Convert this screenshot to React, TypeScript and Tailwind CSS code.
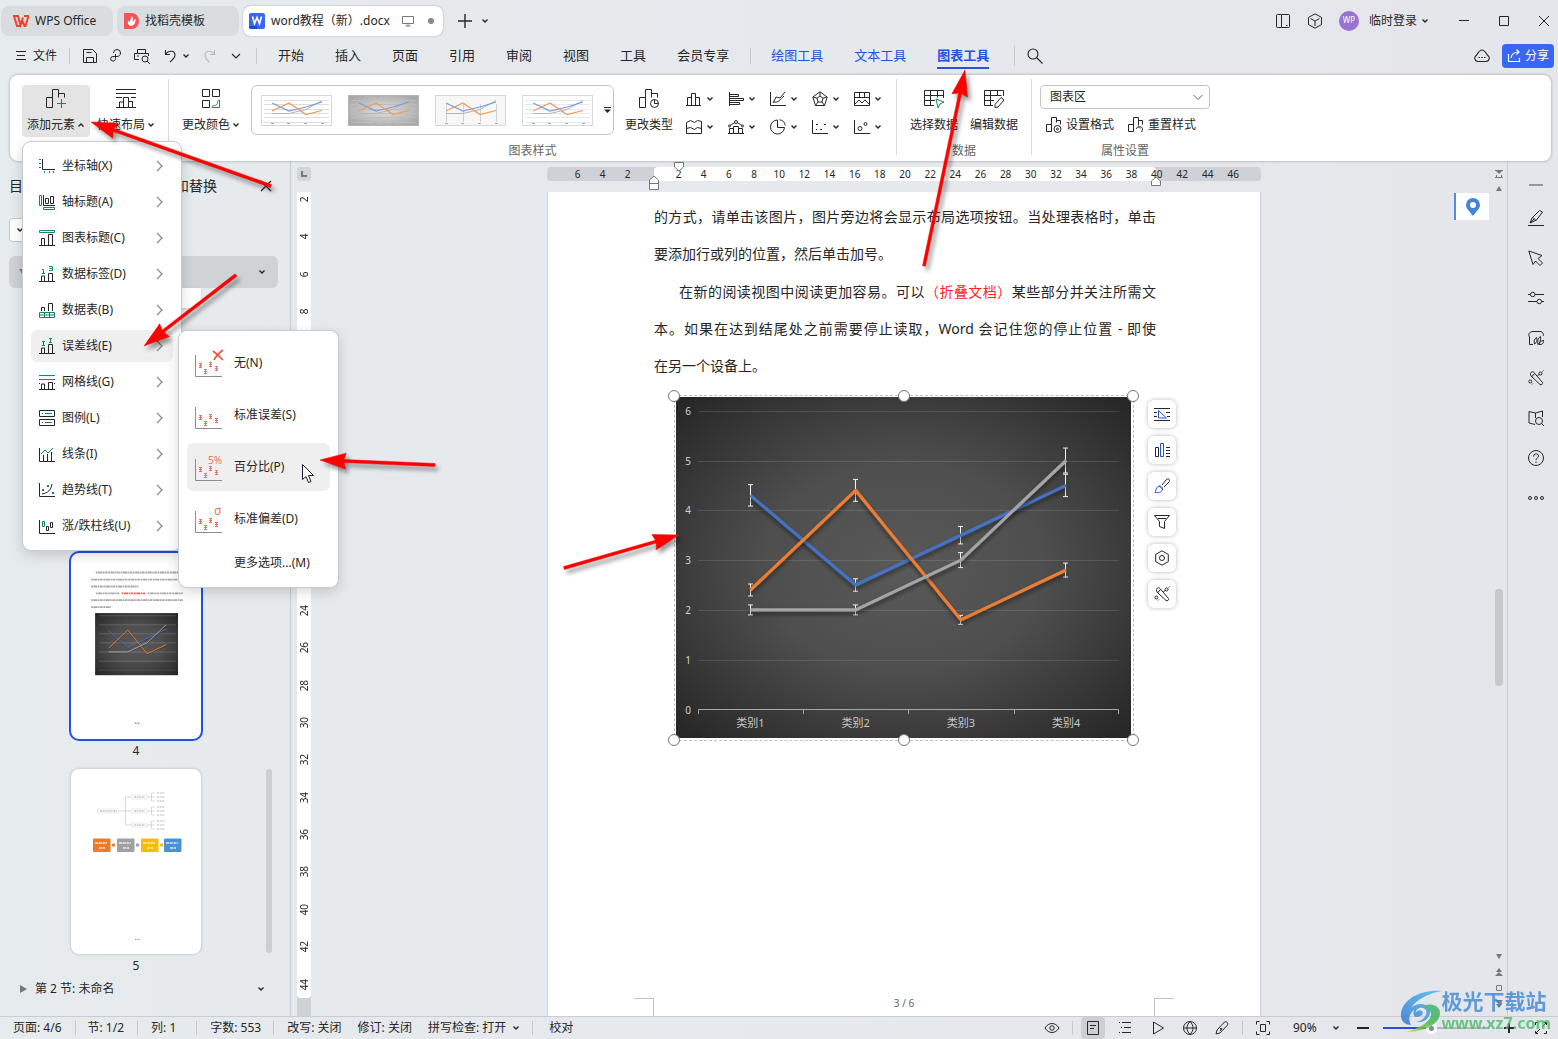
import { ReactNode } from 'react';

const GREEN = '#0f8a5f';
const RED = '#e8745f';

function Ic({ s = 16, w = 1, d, g, children, className = '' }: {
  s?: number; w?: number; d?: string; g?: string; children?: ReactNode; className?: string;
}) {
  return (
    <svg width={s} height={s} viewBox={`0 0 ${s} ${s}`} fill="none" stroke="currentColor" strokeWidth={w} className={`shrink-0 ${className}`} aria-hidden="true">
      {d && <path d={d} />}
      {g && <path d={g} stroke={GREEN} />}
      {children}
    </svg>
  );
}

function Chevron({ up = false }: { up?: boolean }) {
  return (
    <svg width="8" height="8" viewBox="0 0 8 8" fill="none" stroke="currentColor" strokeWidth="1.4" className="shrink-0" aria-hidden="true">
      <path d={up ? 'M1.5 5.5L4 3l2.5 2.5' : 'M1.5 2.5L4 5l2.5-2.5'} />
    </svg>
  );
}

const TABS = ['开始', '插入', '页面', '引用', '审阅', '视图', '工具', '会员专享'];

const MENU = [
  { label: '坐标轴(X)', d: 'M3.5 1v10.5H16', g: 'M0 1.5h2M0 5.5h2M0 9.5h2M5.5 13v2M10.5 13v2M14.5 13v2' },
  { label: '轴标题(A)', d: 'M4.5 1v10.5H16M6.5 9.5v-5h3v5zM11.5 9.5v-7h3v7z', g: 'M.5 1.5h2v10h-2zM4.5 13.5h11v2h-11z' },
  { label: '图表标题(C)', d: 'M0 15.5h16M2.5 15V8.5h3V15M9.5 15V4.5h4V15', g: 'M.5.5h15v2H.5z' },
  { label: '数据标签(D)', d: 'M0 15.5h16M2.5 15v-5h3v5M9.5 15V7.5h4V15', g: 'M3 3.5h1.5v4M3 7.5h3M10 .5h3.5v4H10M10.5 2.5h3' },
  { label: '数据表(B)', d: 'M2.5 9V5.5h3V9M9.5 9V1.5h4V9', g: 'M.5 10.5h15v5H.5zM.5 13h15M5.5 10.5v5M10.5 10.5v5' },
  { label: '误差线(E)', d: 'M0 15.5h16M2.5 15v-5h3v5M9.5 15V6.5h4V15', g: 'M3 3.5h3M4.5 3.5v4M3 7.5h3M10 .5h3M11.5.5v4M10 4.5h3', active: true },
  { label: '网格线(G)', d: 'M0 15.5h16M2.5 15v-5h3v5M9.5 15V8.5h4V15M0 9.5h1M15 9.5h1', g: 'M0 1.5h16M0 5.5h16' },
  { label: '图例(L)', d: 'M.5.5h15v6H.5zM.5 9.5h15v6H.5z', g: 'M3 3.5h1M6 3.5h7M3 12.5h1M6 12.5h7' },
  { label: '线条(I)', d: 'M.5 2v13.5H16M4.5 15V9M8.5 15V8M12.5 15V6', g: 'M2 8l4-4 3 3 5-5' },
  { label: '趋势线(T)', d: 'M.5 1v13.5H16M3 12c6-1 9-4 10-10', g: 'M3 7.5h2M8 3.5h2M13 10.5h2M3 8.5h2M8 4.5h2M13 11.5h2' },
  { label: '涨/跌柱线(U)', d: 'M.5 2v13.5H16M7.5 8.5h2v4h-2zM11.5 4.5h2v5h-2z', g: 'M3.5 3.5h2v5h-2z' },
];

const SUBMENU = [
  { label: '无(N)', mark: 'x' },
  { label: '标准误差(S)', mark: '' },
  { label: '百分比(P)', mark: '5%', active: true },
  { label: '标准偏差(D)', mark: 'σ' },
];

const BARS = 'M6.5 18.5h-6v-10h6M6.5 18.5V.5h6v8M12.5 4.5h6v4';

const CHART_TYPES = [
  { name: '柱形图', d: 'M1.5 14.5v-8h4v8M5.5 14.5v-12h4v12M9.5 14.5v-8h4v8M0 14.5h15' },
  { name: '条形图', d: 'M1.5 1v14M1.5 3.5h9v2h-9M1.5 7.5h14v2h-14M1.5 11.5h10v2h-10' },
  { name: '折线图', d: 'M.5 1v13.5H16M3 12l3-6 4 1 5-6M4 11c4 1 6-2 10-6' },
  { name: '雷达图', d: 'M8 .8l7.200 5.200L12.500 14.500h-9L.8 6zM8 5L11 7.200 10 11H6L5 7.200zM8 1v4M15 6l-4 1.200M1 6l4 1.200M3.500 14.500L6 11M12.500 14.500L10 11' },
  { name: '模板', d: 'M.5 1.5h15v13H.5zM5.5 1.5v5M10.5 1.5v5M.5 6.5h15M1 13l4-4 3 3 3-3 4 4' },
  { name: '面积图', d: 'M.5 14.5V3.5l4-2 4 2 3-2 4 1v12zM.5 9.5l4-1 4 2 3-2 4 1' },
  { name: '组合图', d: 'M1.5 14.5v-5h4v5M5.5 14.5v-7h5v7M10.5 14.5v-5h4v5M0 14.5h16M2 6.5l5-3M9 3.5l5 3M6.5 3a1.500 1.500 0 103 0 1.500 1.500 0 10-3 0M.5 7a1 1 0 102 0 1 1 0 10-2 0M13.5 7a1 1 0 102 0 1 1 0 10-2 0' },
  { name: '饼图', d: 'M7.500 1A7 7 0 1014.500 8.500H7.500zM9.500.8A6.500 6.500 0 0115.200 6.500' },
  { name: '散点图', d: 'M.5 1v13.5H16M4 5.5h2M12 5.5h2M8 10.500h2M4 10.5h1' },
  { name: '气泡图', d: 'M.5 1v13.5H16M4 9.5a2 2 0 104 0 2 2 0 10-4 0M10 5a1.500 1.500 0 103 0 1.500 1.500 0 10-3 0' },
];

function ErrorBarIcon({ mark }: { mark: string }) {
  const marks = [[5, 17], [10, 23], [15, 16], [21, 20]];
  return (
    <svg width="30" height="30" viewBox="0 0 30 30" fill="none" className="shrink-0 overflow-visible" aria-hidden="true">
      <path d="M.5 7v21.5H27" stroke="#8c8c8c" />
      {marks.map(([x, y]) => (
        <path key={x} d={`M${x - 1} ${y - 1.5}h3M${x + 0.5} ${y - 1.5}v4M${x - 1} ${y + 2.5}h3M${x - 1} ${y + 0.5}h3`} stroke={RED} />
      ))}
      {mark === 'x' && <path d="M18 3c4 3 7 6 10 9M28 2c-4 3-7 6-9 10" stroke="#e8553a" strokeWidth="1.6" />}
      {mark === '5%' && <text x="13" y="12" fontSize="10" fill={RED}>5%</text>}
      {mark === 'σ' && <text x="19" y="11" fontSize="12" fill={RED}>σ</text>}
    </svg>
  );
}

function SubMenu() {
  return (
    <ul role="menu" aria-label="误差线" className="absolute left-[156px] top-[189px] flex w-[159px] flex-col gap-1 rounded-lg bg-white p-2 shadow-[0_0_0_1px_#c8ccd0,0_4px_14px_rgba(0,0,0,0.18)]">
      {SUBMENU.map((m) => (
        <li key={m.label} role="none">
          <button role="menuitem" className={`flex h-12 w-full items-center rounded-md pl-2 ${m.active ? 'bg-[#efefef]' : ''}`}>
            <ErrorBarIcon mark={m.mark} />
            <span className="ml-[9px]">{m.label}</span>
          </button>
        </li>
      ))}
      <li role="none">
        <button role="menuitem" className="flex h-8 w-full items-center pl-[47px]">更多选项...(M)</button>
      </li>
    </ul>
  );
}

function ElementMenu() {
  return (
    <ul role="menu" aria-label="添加元素" className="absolute left-px top-[57px] z-30 flex w-[158px] flex-col gap-1 rounded-lg bg-white p-2 shadow-[0_0_0_1px_#c8ccd0,0_4px_14px_rgba(0,0,0,0.18)]">
      {MENU.map((m) => (
        <li key={m.label} role="none">
          <button role="menuitem" className={`flex h-8 w-full items-center rounded-md pl-2 pr-2 ${m.active ? 'bg-[#efefef]' : ''}`}>
            <Ic d={m.d} g={m.g} />
            <span className="ml-[7px] flex-1 text-left">{m.label}</span>
            <Ic s={12} w={1.2} d="M4 1l5 5-5 5" className="text-[#888]" />
          </button>
          {m.active && <SubMenu />}
        </li>
      ))}
    </ul>
  );
}

function TitleBar() {
  return (
    <header className="flex h-[41px] shrink-0 items-center pl-px pr-2">
      <button className="flex h-[30px] w-28 items-center gap-1.5 rounded-lg bg-[#dadde0] pl-3">
        <Ic w={2} className="text-[#f0402f]"><path d="M0 3h5l2.500 9L10 4.500M1 3l3 10h3.500M9 7l2.500 6h1L15.500 3H11" /></Ic>
        <span className="text-xs">WPS Office</span>
      </button>
      <button className="ml-1 flex h-[30px] w-[122px] items-center gap-1.5 rounded-lg bg-[#dadde0] pl-[7px]">
        <svg width="15" height="16" viewBox="0 0 15 16" aria-hidden="true">
          <path d="M0 0h8a7 8 0 010 16H0z" fill="#f2565b" />
          <path d="M7.500 3c2 1.500 1.500 4 .8 5.500C10 8 10.500 6.500 11 5.500c1.500 3-.5 7-4 7.500-3-.5-3.500-3-3-5 .8 0 1.500.8 1.800 1.500C5.500 7 7.500 6 7.500 3z" fill="#fff" />
        </svg>
        <span>找稻壳模板</span>
      </button>
      <div className="ml-1 flex h-[30px] w-[200px] items-center rounded-lg bg-white pl-1.5 shadow-[0_0_2px_rgba(0,0,0,0.3)]">
        <svg width="16" height="16" viewBox="0 0 16 16" aria-hidden="true">
          <rect width="16" height="16" rx="2" fill="#3a66f5" />
          <path d="M0 13h8v3H2a2 2 0 01-2-2z" fill="#1d47d0" />
          <path d="M3.500 3.500l2 7L8 4.500l2.500 6 2-7" fill="none" stroke="#fff" strokeWidth="1.6" />
        </svg>
        <span className="ml-1.5 whitespace-nowrap">word教程（新）.docx</span>
        <Ic s={12} d="M.5 1.5h11v7H.5zM3.5 11h5M6 8.5V11" className="ml-3 text-[#777]" />
        <span className="ml-3.5 size-1.5 rounded-full bg-[#888]" />
      </div>
      <button aria-label="新建" className="ml-3.5"><Ic w={1.4} d="M8 1v14M1 8h14" /></button>
      <button aria-label="标签列表" className="ml-2"><Chevron /></button>
      <div className="ml-auto flex items-center">
        <button aria-label="多设备"><Ic d="M6 1.5H2.500a1 1 0 00-1 1v11a1 1 0 001 1H6M6.500 1.5h7a1 1 0 011 1v11a1 1 0 01-1 1h-7zM11 12.5h1.500" /></button>
        <button aria-label="应用" className="ml-4"><Ic d="M8 .8l6.500 3.600v7.200L8 15.200l-6.500-3.600V4.400zM3.500 5.500L8 8l4.500-2.500M8 8v5" /></button>
        <span className="ml-4 flex size-5 items-center justify-center rounded-full bg-[#9873d0] text-[8px] text-white">WP</span>
        <button className="ml-2.5 flex items-center gap-1">临时登录<Chevron /></button>
        <button aria-label="最小化" className="ml-[29px]"><Ic s={12} d="M1 5.5h10" /></button>
        <button aria-label="最大化" className="ml-7"><Ic s={12} d="M1.5 1.5h9v9h-9z" /></button>
        <button aria-label="关闭" className="ml-7"><Ic s={12} d="M1 1l10 10M11 1L1 11" /></button>
      </div>
    </header>
  );
}

function MenuBar() {
  return (
    <nav className="flex h-[30px] shrink-0 items-center pl-4 pr-1 text-[13px]">
      <button className="flex items-center gap-[7px] text-xs">
        <Ic s={10} d="M0 .5h10M1 4.5h8M0 8.5h10" />文件
      </button>
      <span className="ml-3 h-4 w-px bg-[#c5c9cc]" />
      <button aria-label="保存" className="ml-3"><Ic d="M1.5 1.5h9l4 4v9h-13zM4.500 14V9.500h7V14M4.500 4.500h5" /></button>
      <button aria-label="导出" className="ml-2.5"><Ic d="M5.500 5a3.500 3.500 0 117 0c0 2-1.500 3.500-3.500 3.500H5a2.300 2.300 0 100 4.600c1.700 0 2.500-1.200 2.500-2.600V6" /></button>
      <button aria-label="打印预览" className="ml-2.5"><Ic d="M3.500 5V1.500h8V5M5 11.500H.5v-6h14V8M3 8h2M8 11a3 3 0 106 0 3 3 0 10-6 0M13 13l3 3" /></button>
      <button aria-label="撤销" className="ml-3 flex items-center gap-1"><Ic w={1.1} d="M3.500 2v4.500H8M3.500 6.500C6 2 13 2 13 7c0 3-3 5-5 7" /><Chevron /></button>
      <button aria-label="恢复" className="ml-3 text-[#b5b8bb]"><Ic w={1.1} d="M12.500 2v4.500H8M12.500 6.500C10 2 3 2 3 7c0 3 2 5 4 7" /></button>
      <button aria-label="更多" className="ml-3"><Ic s={12} w={1.1} d="M2 4l4 4 4-4" /></button>
      <span className="ml-3.5 h-4 w-px bg-[#c5c9cc]" />
      <div className="ml-[21px] flex gap-[31px]">
        {TABS.map((t) => <button key={t}>{t}</button>)}
      </div>
      <span className="ml-[21px] h-4 w-px bg-[#c5c9cc]" />
      <div className="ml-5 flex gap-[31px] text-[#2352e0]">
        <button>绘图工具</button>
        <button>文本工具</button>
        <button className="-mb-1 border-b-2 border-[#2352e0] pb-0.5 font-bold">图表工具</button>
      </div>
      <span className="ml-[25px] h-5 w-px bg-[#c5c9cc]" />
      <button aria-label="搜索" className="ml-3"><Ic w={1.1} d="M1 6a5 5 0 1010 0A5 5 0 101 6M9.500 9.500l6 6" /></button>
      <button aria-label="云同步" className="ml-auto"><Ic w={1.1} d="M4 13.500h8a3.300 3.300 0 001.500-6.200C12 5 10.500 2 8 2S4 5 2.500 7.300A3.300 3.300 0 004 13.500zM4.500 9.500h1.500M7.300 9.500h1.500M10 9.500h1.500" /></button>
      <button className="ml-3 flex h-6 w-[52px] items-center justify-center gap-1 rounded-[4px] bg-[#3a66f5] text-xs text-white">
        <Ic s={14} w={1.2} d="M1.5 5v7.500h11V9M4 9c.5-4 3-6 8-6M9.500.5L12 3 9.500 5.500" />分享
      </button>
    </nav>
  );
}

function StyleThumb({ kind }: { kind: number }) {
  return (
    <button aria-label={`样式 ${kind + 1}`}>
      <svg width="71" height="31" viewBox="0 0 71 31" fill="none" aria-hidden="true">
        <defs>
          <radialGradient id="styleGrey" cx="50%" cy="50%" r="60%">
            <stop offset="0" stopColor="#e2e2e2" />
            <stop offset="1" stopColor="#a8a8a8" />
          </radialGradient>
        </defs>
        <rect x=".5" y=".5" width="70" height="30" fill={kind === 1 ? 'url(#styleGrey)' : kind === 2 ? '#f7f7f7' : '#fff'} stroke={kind === 1 ? '#b5b5b5' : kind === 3 ? '#d3dae4' : '#d8d8d8'} />
        {kind !== 2 && [5, 9, 14, 18, 22, 27].map((y) => <path key={y} d={`M3 ${y}.5h65`} stroke={kind === 1 ? '#bdbdbd' : kind === 3 ? '#e3e9f0' : '#dedede'} />)}
        {kind === 2 && [11, 28, 45, 61].map((x) => <path key={x} d={`M${x}.5 9v18`} stroke="#d0d0d0" />)}
        <path d="M11 18.5h17l17-4 16-9" stroke="#b5b5b5" />
        <path d="M11 8l17 8 17-4 16-5" stroke="#7a9bdc" strokeWidth="1.2" />
        <path d="M11 16l17-8 17 11.500 16-4" stroke="#f29a5c" strokeWidth="1.2" />
        <path d="M10 28.5h3M26 28.5h3M43 28.5h3M60 28.5h3" stroke="#aaa" />
      </svg>
    </button>
  );
}

function BigButton({ label, icon, drop, className = 'w-[68px]' }: { label: string; icon: ReactNode; drop?: ReactNode; className?: string }) {
  return (
    <button className={`flex h-[52px] flex-col items-center justify-between rounded pb-1 pt-1 ${className}`}>
      {icon}
      <span className="flex items-center gap-0.5 whitespace-nowrap leading-4">{label}{drop}</span>
    </button>
  );
}

function Group({ title, children }: { title: string; children: ReactNode }) {
  return (
    <div className="flex flex-col items-center">
      <div className="flex h-[58px]">{children}</div>
      <span className="leading-4 text-[#666]">{title}</span>
    </div>
  );
}

function Divider() {
  return <span className="-mt-1.5 mb-1.5 w-px bg-[#dcdcdc]" />;
}

function Ribbon() {
  return (
    <section className="relative z-20 mx-2.5 mr-[7px] mt-1 flex h-[86px] shrink-0 rounded-lg bg-white pl-3 pt-2.5 shadow-[0_0_3px_rgba(0,0,0,0.35)]">
      <div className="relative flex h-[52px] gap-0.5 pr-2">
        <BigButton label="添加元素" drop={<Chevron up />} className="w-[68px] bg-[#e4e4e4]" icon={<Ic s={20} d={BARS} g="M15.5 10v9M11 14.5h9" />} />
        <BigButton label="快速布局" drop={<Chevron />} icon={<Ic s={20} d="M0 .5h20M0 4.5h20M0 8.5h6M15 8.5h5M0 18.5h20M3.500 18v-5h4v5M7.500 13V8.500h5V18M12.500 12.500h4V18" />} />
        <ElementMenu />
      </div>
      <Divider />
      <Group title="图表样式">
        <div className="flex w-[727px] items-start pl-2">
          <BigButton label="更改颜色" drop={<Chevron />} icon={<Ic s={20} d="M1.5.5h7v7h-7zM11.500.5h7v7h-7zM1.5 11.500h7v7h-7z" g="M11 18.5h7.500V11c-1 0-2 1-2 2.500s-1 3-3 3-2.500 1-2.500 2z" />} />
          <div className="ml-1.5 flex h-[50px] w-[363px] items-center gap-4 rounded-md border border-[#c4c4c4] pl-[9px]">
            {[0, 1, 2, 3].map((k) => <StyleThumb key={k} kind={k} />)}
            <button aria-label="更多样式" className="-ml-[5px]"><Ic s={7} d="M0 .5h7"><path d="M0 2.500h7L3.500 6z" fill="currentColor" stroke="none" /></Ic></button>
          </div>
          <BigButton label="更改类型" className="ml-[3px] w-16" icon={<Ic s={20} d={`${BARS}M11.500 14.500a4 4 0 108 0 4 4 0 10-8 0M15.500 10.500v4h4`} />} />
          <div className="ml-[5px] grid grid-cols-5 gap-y-1 pt-0.5">
            {CHART_TYPES.map((c) => (
              <button key={c.name} aria-label={c.name} className="flex h-6 w-[42px] items-center gap-1">
                <Ic d={c.d} /><Chevron />
              </button>
            ))}
          </div>
        </div>
      </Group>
      <Divider />
      <Group title="数据">
        <div className="flex w-[134px] items-start pl-[7px]">
          <BigButton label="选择数据" className="w-[60px]" icon={<Ic s={20} d="M10 16.500H.5V1.500h19V9M.5 6.500h19M6.500 1.500v15M13.500 1.500v7M.5 11.500H11" g="M12 10l8 3-4 2-2 4z" />} />
          <BigButton label="编辑数据" className="w-[60px]" icon={<Ic s={20} d="M9 16.500H.5V1.500h19V7M.5 6.500h17M6.500 1.500v15M13.500 1.500v5M.5 11.500H10M11 18.500v-3l6-7 3 2.500-6 7z" />} />
        </div>
      </Group>
      <Divider />
      <Group title="属性设置">
        <div className="flex w-[186px] flex-col px-2">
          <div className="relative">
            <select aria-label="图表元素" className="h-6 w-[170px] appearance-none rounded-[4px] border border-[#c4c4c4] bg-white pl-[9px] text-xs leading-5">
              <option>图表区</option>
            </select>
            <Ic s={12} d="M1.5 4L6 8.500 10.500 4" className="pointer-events-none absolute right-1.5 top-1.5 text-[#666]" />
          </div>
          <div className="mt-2 flex gap-3.5 pl-1.5">
            <button className="flex items-center gap-1 whitespace-nowrap leading-4"><Ic d="M5.500 14.500h-5v-7h5M5.500 14.500V.5h5v5M10.500 3.500h4v4M8 12a3.500 3.500 0 107 0 3.500 3.500 0 10-7 0M10.500 12a1 1 0 102 0 1 1 0 10-2 0" />设置格式</button>
            <button className="flex items-center gap-1 whitespace-nowrap leading-4"><Ic d="M5.500 14.500h-5v-7h5M5.500 14.500V.5h5v8M10.500 3.500h4v4M8 12l2-2.500 2 2M10.500 10c4-1 5 2 3 5" />重置样式</button>
          </div>
        </div>
      </Group>
    </section>
  );
}

const SERIES = [
  { color: '#4472c4', values: [4.3, 2.5, 3.5, 4.5] },
  { color: '#ed7d31', values: [2.4, 4.4, 1.8, 2.8] },
  { color: '#a5a5a5', values: [2, 2, 3, 5] },
];

const cx = (i: number) => 74.5 + 105.2 * i;
const cy = (v: number) => 312.5 - 49.8 * v;

function LineChart({ small = false, ...box }: { small?: boolean; x?: number; y?: number; width: number; height: number }) {
  return (
    <svg {...box} viewBox="0 0 455 341" fill="none" role="img" aria-label="折线图">
      <defs>
        <radialGradient id="chartBg" cx="50%" cy="50%" r="68%">
          <stop offset="0" stopColor="#595959" />
          <stop offset="0.45" stopColor="#4e4e4e" />
          <stop offset="1" stopColor="#272727" />
        </radialGradient>
        <filter id="lineShadow" x="-10%" y="-10%" width="120%" height="130%">
          <feDropShadow dx="0" dy="3" stdDeviation="2" floodColor="#000" floodOpacity="0.5" />
        </filter>
      </defs>
      <rect width="455" height="341" fill="url(#chartBg)" />
      {[1, 2, 3, 4, 5, 6].map((v) => (
        <path key={v} d={`M22 ${Math.round(cy(v)) + 0.5}h421`} stroke="#fff" strokeOpacity={small ? 0.3 : 0.12} strokeWidth={small ? 3 : 1} />
      ))}
      <path d="M22.500 317v-4.500h420v4.500M127.500 312.500v4.500M232.500 312.500v4.500M338.500 312.500v4.500" stroke="#a8a8a8" />
      {!small && [0, 1, 2, 3, 4, 5, 6].map((v) => (
        <text key={v} x="12" y={cy(v) + 4} textAnchor="middle" fontSize="10" fill="#d0d0d0">{v}</text>
      ))}
      {!small && [0, 1, 2, 3].map((i) => (
        <text key={i} x={cx(i)} y="330" textAnchor="middle" fontSize="11" fill="#c8c8c8">{`类别${i + 1}`}</text>
      ))}
      {!small && SERIES.map((s) => s.values.map((v, i) => {
        const x = Math.round(cx(i)) - 0.5;
        return <path key={`${s.color}${i}`} d={`M${x - 2.5} ${cy(v * 1.05)}h5M${x} ${cy(v * 1.05)}V${cy(v * 0.95)}M${x - 2.5} ${cy(v * 0.95)}h5`} stroke="#f2f2f2" />;
      }))}
      {SERIES.map((s) => (
        <polyline key={s.color} points={s.values.map((v, i) => `${cx(i)},${cy(v)}`).join(' ')} stroke={s.color} strokeWidth={small ? 5 : 3.2} strokeLinejoin="round" filter="url(#lineShadow)" />
      ))}
    </svg>
  );
}

function PageThumb() {
  return (
    <svg width="130" height="186" viewBox="0 0 714 1022" aria-hidden="true">
      <g stroke="#a8a8a8" strokeWidth="10" strokeDasharray="10 3 22 3 8 3 15 4">
        <path d="M136 107h478M110 146h504M110 184h260M136 222h130M420 222h194M110 259h504M110 297h110" />
        <path d="M278 222h130" stroke="#f06060" />
      </g>
      <LineChart small x={132} y={328} width={456} height={346} />
      <path d="M350 936h10M366 936h10" stroke="#999" strokeWidth="8" />
    </svg>
  );
}

function TreeThumb() {
  const boxes = [
    { x: 22, c: '#f07a28' }, { x: 46, c: '#a0a0a0' }, { x: 70, c: '#f5bd0a' }, { x: 93, c: '#4a92d8' },
  ];
  return (
    <svg width="130" height="185" viewBox="0 0 130 185" fill="none" aria-hidden="true">
      <path d="M48 42h6.500M61 28h-6.500v28H61M54.500 42H61" stroke="#c4c8e0" strokeWidth=".7" />
      <rect x="26.500" y="40" width="21" height="4" stroke="#ddd" strokeWidth=".6" />
      <path d="M29 42h17" stroke="#aaa" strokeDasharray="2 .6" />
      {[28, 42, 56].map((y) => (
        <g key={y}>
          <rect x="61" y={y - 2} width="15" height="4" stroke="#ddd" strokeWidth=".6" />
          <path d={`M63 ${y}h11`} stroke="#aaa" strokeDasharray="2 .6" />
          <path d={`M76 ${y}h8M84 ${y - 4}h-3.500v8H84`} stroke="#ccc" strokeWidth=".7" />
          <path d={`M86 ${y - 4}h8M86 ${y}h8M86 ${y + 4}h8`} stroke="#bbb" strokeDasharray="2 .6" />
        </g>
      ))}
      {boxes.map((b, i) => (
        <g key={b.x}>
          <rect x={b.x} y="69.500" width="17.500" height="13.500" rx="1" fill={b.c} />
          <path d={`M${b.x + 2} 74h12M${b.x + 6} 79h6`} stroke="#fff" strokeOpacity=".6" strokeWidth="2" strokeDasharray="3 .7" />
          {i < 3 && <circle cx={b.x + 20.5} cy="76" r="1.700" fill={b.c} />}
        </g>
      ))}
      <path d="M64 170.500h1.500M67 170.500h1.500" stroke="#999" />
    </svg>
  );
}

function SidePanel() {
  return (
    <aside className="relative flex w-[291px] shrink-0 flex-col border-r border-[#c9ccd0]">
      <div className="flex h-12 items-center pl-[9px] text-sm">
        <button>目录</button>
        <button className="ml-4">章节</button>
        <button className="ml-4">书签</button>
        <button className="ml-[22px] whitespace-nowrap">查找和替换</button>
        <button aria-label="关闭面板" className="ml-auto mr-[18px]"><Ic s={12} w={1.2} d="M1 1l10 10M11 1L1 11" /></button>
      </div>
      <button aria-label="章节导航" className="ml-[9px] mt-2 flex h-6 w-16 items-center rounded border border-[#c4c8cc] bg-white pl-1.5"><Chevron /></button>
      <div className="ml-[9px] mr-3 mt-3.5 flex h-8 shrink-0 items-center rounded-md bg-[#cfd3d6] pl-2.5 pr-3">
        <span className="flex-1 text-[8px] text-[#777]">▼</span>
        <Chevron />
      </div>
      <ol className="ml-[71px] flex w-[130px] flex-col">
        <li className="flex h-[50px] flex-col items-center">
          <span className="h-5 w-full rounded-b-lg bg-white shadow-sm" />
          <span className="leading-6">2</span>
        </li>
        <li className="flex h-[215px] flex-col items-center">
          <span className="h-[186px] w-full rounded-lg bg-white" />
          <span className="leading-6">3</span>
        </li>
        <li className="flex h-[216px] flex-col items-center">
          <span className="block h-[186px] w-full rounded-lg bg-white outline-2 outline-[#2352e0]"><PageThumb /></span>
          <span className="leading-6">4</span>
        </li>
        <li className="flex h-[209px] flex-col items-center">
          <span className="block h-[185px] w-full rounded-lg bg-white shadow-[0_0_3px_rgba(0,0,0,0.25)]"><TreeThumb /></span>
          <span className="leading-6">5</span>
        </li>
      </ol>
      <button className="ml-5 mr-[25px] flex h-[22px] shrink-0 items-center">
        <svg width="8" height="8" viewBox="0 0 8 8" aria-hidden="true"><path d="M0 0l7 4-7 4z" fill="#777" /></svg>
        <span className="ml-[7px] flex-1 text-left">第 2 节: 未命名</span>
        <Chevron />
      </button>
      <span className="absolute right-[18px] top-[607px] h-[184px] w-1.5 rounded-full bg-[#cccfd2]" />
    </aside>
  );
}

const even = (from: number, to: number) => Array.from({ length: (to - from) / 2 + 1 }, (_, i) => from + i * 2);

function HorizontalRuler() {
  return (
    <div className="relative flex h-3.5 w-[714px] shrink-0 rounded bg-[#cfd1d6] text-[10px] leading-[14px]">
      <div className="flex w-[107px] pl-[18px] pr-3.5 text-center">
        {[6, 4, 2].map((n) => <span key={n} className="flex-1">{n}</span>)}
      </div>
      <div className="flex w-[502px] rounded bg-white px-3 text-center">
        {even(2, 38).map((n) => <span key={n} className="w-0 flex-1">{n}</span>)}
      </div>
      <div className="z-10 -ml-3 flex w-[102px] text-center">
        {even(40, 46).map((n) => <span key={n} className="flex-1">{n}</span>)}
      </div>
      <svg width="12" height="10" viewBox="0 0 12 10" className="absolute left-[126px] top-[-5px]" aria-hidden="true"><path d="M1.5.5h9v4.500l-4.500 4-4.500-4z" fill="#fff" stroke="#777" /></svg>
      <svg width="12" height="16" viewBox="0 0 12 16" className="absolute left-[101px] top-2" aria-hidden="true"><path d="M6 1l4.500 4v9.500h-9V5zM1.5 8.500h9" fill="#fff" stroke="#777" /></svg>
      <svg width="12" height="10" viewBox="0 0 12 10" className="absolute left-[603px] top-[9px]" aria-hidden="true"><path d="M6 1l4.500 4v4.500h-9V5z" fill="#fff" stroke="#777" /></svg>
    </div>
  );
}

function VerticalRuler() {
  return (
    <div className="flex w-[26px] shrink-0 flex-col items-start pl-1.5">
      <span className="mb-[11px] mt-[5px] flex size-3.5 shrink-0 items-center justify-center rounded-[3px] bg-[#d3d5d8]">
        <span className="size-1.5 border-b-2 border-l-2 border-[#777]" />
      </span>
      <div className="flex min-h-0 w-3.5 flex-1 flex-col bg-[#cfd3d6]">
        <div className="h-[806px] shrink-0 overflow-hidden rounded-b bg-white">
          <div className="-mt-[11px] flex h-[822px] flex-col">
            {even(2, 44).map((n) => (
              <span key={n} className="flex flex-1 rotate-180 items-center justify-center text-[10px] leading-[14px] [writing-mode:vertical-rl]">{n}</span>
            ))}
          </div>
        </div>
      </div>
    </div>
  );
}

const FLOATING = [
  { name: '布局选项', d: 'M0 2.500h16M0 6.500h3M0 10.500h3M12 6.500h4M13 10.500h3M0 14.500h16', b: 'M4.500 4.500v7.500h8z' },
  { name: '图表元素', d: 'M1.5 5.500h3v9h-3zM12 5.500h4M12 8.500h4M12 11.500h4M12 14.500h4', b: 'M6.500 1.500h3v13h-3z' },
  { name: '图表样式', d: 'M8 7l4.500-5.500c2-1.500 4 .5 2.500 2.500L10 9', b: 'M1 14.500c1-1 .5-4 3-6 2-1.500 5 .5 4.500 3-1 3-4 3.500-7.500 3zM5 8l4 3.500' },
  { name: '筛选', d: 'M.5 1.500h15l-5 6v7l-5-2v-5zM4 4.500h8', b: '' },
  { name: '设置', d: 'M8 .8l6.300 3.600v7.200L8 15.200l-6.300-3.600V4.400zM5.500 8a2.500 2.500 0 105 0 2.500 2.500 0 10-5 0', b: '' },
];

// wand head top left, two sparks on the other diagonal
const WAND = 'M2.500 4c0-2 2-3 3.500-1.500l8.500 10c.5 1.500-1 3-2.500 2L3 6zM3.500 7l3-3.500M11 3.500a1.500 1.500 0 103 0 1.500 1.500 0 10-3 0M.8 11.500a1.500 1.500 0 103 0 1.500 1.500 0 10-3 0M9.500 6l2-2M4 14.500l1-1M14.500 1.500l1-1';

function ChartObject() {
  const handle = 'absolute size-3 rounded-full border border-[#777] bg-white';
  return (
    <div className="relative ml-5 mt-[11px] h-[346px] w-[460px] border border-dashed border-[#c0c0c0] p-px">
      <LineChart width={455} height={341} />
      <span className={`${handle} -left-[7px] -top-1.5`} />
      <span className={`${handle} -top-1.5 left-[223px]`} />
      <span className={`${handle} -right-1.5 -top-1.5`} />
      <span className={`${handle} -bottom-1.5 -left-[7px]`} />
      <span className={`${handle} -bottom-1.5 left-[223px]`} />
      <span className={`${handle} -bottom-1.5 -right-1.5`} />
      <div className="absolute left-[473px] top-1 flex flex-col gap-2">
        {FLOATING.map((f) => (
          <button key={f.name} aria-label={f.name} className="flex size-7 items-center justify-center rounded-md bg-white shadow-[0_0_4px_rgba(0,0,0,0.28)]">
            <Ic d={f.d}>{f.b && <path d={f.b} stroke="#2352e0" />}</Ic>
          </button>
        ))}
        <button aria-label="智能美化" className="flex size-7 items-center justify-center rounded-md bg-white shadow-[0_0_4px_rgba(0,0,0,0.28)]"><Ic d={WAND} /></button>
      </div>
    </div>
  );
}

function DocumentArea() {
  return (
    <main className="flex min-w-0 flex-1 flex-col items-center">
      <div className="h-[30px] shrink-0 pt-[5px]"><HorizontalRuler /></div>
      <article className="flex w-[714px] flex-1 flex-col overflow-hidden border-x border-[#cfd1d4] bg-white pl-[106px] pt-1.5 text-sm leading-[37px]">
        <div className="w-[502px]">
          <p className="[text-align-last:justify]">的方式，请单击该图片，图片旁边将会显示布局选项按钮。当处理表格时，单击</p>
          <p>要添加行或列的位置，然后单击加号。</p>
          <p className="mt-px pl-[25px] [text-align-last:justify]">
            在新的阅读视图中阅读更加容易。可以<span className="text-[#ff2020]">（折叠文档）</span>某些部分并关注所需文
          </p>
          <p className="[text-align-last:justify]">本。如果在达到结尾处之前需要停止读取，Word 会记住您的停止位置 - 即使</p>
          <p>在另一个设备上。</p>
        </div>
        <ChartObject />
        <div className="-ml-5 mt-auto flex h-[18px] w-[540px] items-start justify-between text-[10px] leading-[10px] text-[#666]">
          <span className="h-full w-5 border-r border-t border-[#c0c0c0]" />
          <span>3 / 6</span>
          <span className="h-full w-5 border-l border-t border-[#c0c0c0]" />
        </div>
      </article>
    </main>
  );
}

function ScrollRail() {
  return (
    <div className="relative flex w-4 shrink-0 flex-col items-center pt-2 text-[#777]">
      <Ic s={8} d="M0 .5h8M0 7.500h8M1.5 5v2M6.500 5v2"><path d="M1 1h6L4 4z" fill="currentColor" stroke="none" /></Ic>
      <svg width="6" height="6" viewBox="0 0 6 6" fill="currentColor" className="mt-2" aria-hidden="true"><path d="M3 0l3 5H0z" /></svg>
      <span className="mt-[397px] h-[97px] w-2 rounded-full bg-[#c6c8cc]" />
      <svg width="6" height="6" viewBox="0 0 6 6" fill="currentColor" className="mb-2 mt-auto" aria-hidden="true"><path d="M3 5l3-5H0z" /></svg>
      <svg width="8" height="9" viewBox="0 0 8 9" fill="currentColor" className="mb-2" aria-hidden="true"><path d="M4 0l3 4H1zM4 4l4 4H0z" /></svg>
      <span className="mb-2 size-1.5 rounded-[1px] border border-[#777]" />
      <svg width="8" height="9" viewBox="0 0 8 9" fill="currentColor" className="mb-2" aria-hidden="true"><path d="M4 9l3-4H1zM4 5l4-4H0z" /></svg>
      <button aria-label="定位" className="absolute right-[18px] top-[31px] flex h-[27px] w-[35px] items-center justify-center border-l-2 border-[#4a8cf0] bg-white">
        <svg width="14" height="18" viewBox="0 0 14 18" aria-hidden="true"><path d="M7 0a7 7 0 00-7 7c0 4 4 6.500 7 11 3-4.500 7-7 7-11a7 7 0 00-7-7zm0 4a3 3 0 110 6 3 3 0 010-6z" fill="#4285d6" fillRule="evenodd" /></svg>
      </button>
    </div>
  );
}

const TOOLS = [
  { name: '编辑', d: 'M0 15.500h16M2 13l2-5 7.500-7.500 3 1.500-6 8zM5 7.500l3 3M2 13l4-4' },
  { name: '选择', d: 'M.8 1l4.200 13.500L7.500 11l4.500 4.500 2.500-2.500L10 8.500l4-3z' },
  { name: '属性', d: 'M0 4.500h2.500M7 4.500h9M2.500 4.500a2.200 2.200 0 104.500 0 2.200 2.200 0 10-4.500 0M0 11.500h9M13.500 11.500H16M9 11.500a2.200 2.200 0 104.500 0 2.200 2.200 0 10-4.500 0' },
  { name: '素材', d: 'M5 14.500H1.500V7C-.5 4 2 1.500 5 1.500h7c3 0 4 3 3 4.500M6.500 14c-1-3 0-5 2-6.500 1 3 .5 5-2 6.500zM10 14.500c-1-4 .5-7 2.500-8 .5 3 0 6-2.500 8zM11 14.500c.5-3 2.500-4 5-4-.5 3-2 4.500-5 4z' },
  { name: '美化', d: WAND },
  { name: '查阅', d: 'M7 14.500l-6-1.500V1.500l6.500 1.500L14.500 1v6M7.500 3v5M7.500 11a3.500 3.500 0 107 0 3.500 3.500 0 10-7 0M13.500 13.500l2.500 2.500' },
  { name: '帮助', d: 'M.5 8a7.500 7.500 0 1015 0 7.500 7.500 0 10-15 0M5.500 6.500c0-3.500 5-3.500 5-.5 0 2-2.500 2-2.500 4M8 11.500v1.500' },
  { name: '更多', d: 'M.5 8a1.500 1.500 0 103 0 1.500 1.500 0 10-3 0M6.500 8a1.500 1.500 0 103 0 1.500 1.500 0 10-3 0M12.500 8a1.500 1.500 0 103 0 1.500 1.500 0 10-3 0' },
];

function StatusBar() {
  const sep = <span className="h-3.5 w-px bg-[#c5c9cc]" />;
  return (
    <footer className="flex h-[23px] shrink-0 items-center border-t border-[#c9ccd0] pl-[13px] pr-[9px]">
      <div className="flex items-center gap-3 whitespace-nowrap">
        <span className="mr-px">页面: 4/6</span>{sep}
        <span className="mr-px">节: 1/2</span>{sep}
        <span className="ml-px mr-2">列: 1</span>{sep}
        <span className="ml-px">字数: 553</span>{sep}
        <button className="ml-px mr-1">改写: 关闭</button>
        <button className="mr-1">修订: 关闭</button>
        <button className="flex items-center gap-1.5">拼写检查: 打开<Chevron /></button>{sep}
        <button className="ml-1">校对</button>
      </div>
      <div className="ml-auto flex items-center">
        <button aria-label="护眼模式"><Ic d="M1 8c3.500-6 10.500-6 14 0-3.500 6-10.500 6-14 0zM5.800 8a2.200 2.200 0 104.400 0 2.200 2.200 0 10-4.400 0" /></button>
        <span className="ml-3 h-3.5 w-px bg-[#c5c9cc]" />
        <button aria-label="页面视图" className="ml-2 flex h-[22px] w-6 items-center justify-center rounded bg-[#cdcfd2]"><Ic s={14} d="M1.5.5h11v13h-11zM4 4.500h6M4 7.500h4" /></button>
        <button aria-label="大纲视图" className="ml-3"><Ic d="M2 2.500h1M5 2.500h9M4 7.500h1M7 7.500h7M2 12.500h1M5 12.500h9" /></button>
        <button aria-label="阅读视图" className="ml-[17px]"><Ic d="M3.500 2l10 6-10 6z" /></button>
        <button aria-label="网页视图" className="ml-4"><Ic d="M1.5 8a6.500 6.500 0 1013 0 6.500 6.500 0 10-13 0M1.5 8h13M8 1.500c-4 4-4 9 0 13M8 1.500c4 4 4 9 0 13" /></button>
        <button aria-label="写作模式" className="ml-4"><Ic d="M2 14l1-4 7.500-8c2-1 4 1 3 3L6 13zM5.500 7.500l3 3M8 8l-2 3" /></button>
        <span className="ml-3 h-3.5 w-px bg-[#c5c9cc]" />
        <button aria-label="适合页面" className="ml-3"><Ic d="M4.500 1.500h-3v3M11.500 1.500h3v3M4.500 14.500h-3v-3M11.500 14.500h3v-3M5.500 4.500h5v7h-5z" /></button>
        <span className="ml-[22px] w-[26px]">90%</span>
        <button aria-label="缩放比例" className="ml-[13px]"><Chevron /></button>
        <button aria-label="缩小" className="ml-[17px]"><Ic s={12} w={2} d="M0 6h12" /></button>
        <input type="range" aria-label="缩放" defaultValue={45} className="ml-3.5 h-0.5 w-[106px] appearance-none bg-linear-to-r from-[#2352e0] from-45% to-[#b4b6ba] to-45% [&::-webkit-slider-thumb]:size-[11px] [&::-webkit-slider-thumb]:appearance-none [&::-webkit-slider-thumb]:rounded-full [&::-webkit-slider-thumb]:border-[3px] [&::-webkit-slider-thumb]:border-white [&::-webkit-slider-thumb]:bg-[#888]" />
        <button aria-label="放大" className="ml-3.5"><Ic s={12} w={2} d="M1 6h10M6 1v10" /></button>
        <button aria-label="全屏" className="ml-[18px]"><Ic d="M5 2.500H2.500V5M11 2.500h2.500V5M5 13.500H2.500V11M11 13.500h2.500V11M9 7l4-4M7 9l-4 4" /></button>
      </div>
    </footer>
  );
}

function Arrow({ from, to }: { from: [number, number]; to: [number, number] }) {
  const dx = to[0] - from[0];
  const dy = to[1] - from[1];
  const len = Math.hypot(dx, dy);
  const ux = dx / len;
  const uy = dy / len;
  // point at `back` px behind the tip and `side` px off the shaft
  const p = (back: number, side: number) => `${to[0] - ux * back - uy * side},${to[1] - uy * back + ux * side}`;
  return (
    <polygon points={[p(0, 0), p(26, 8), p(24, 1.5), p(len, 1.5), p(len, -1.5), p(24, -1.5), p(26, -8)].join(' ')} fill="#ff0000" stroke="#ee0000" strokeWidth=".5" strokeLinejoin="round" />
  );
}

function Annotations() {
  return (
    <svg className="pointer-events-none absolute left-0 top-0 z-40 h-full w-full" aria-hidden="true">
      <g className="drop-shadow-[3px_4px_2px_rgba(0,0,0,0.4)]">
        <Arrow from={[271, 186]} to={[91, 122]} />
        <Arrow from={[924, 266]} to={[965, 70]} />
        <Arrow from={[236, 275]} to={[144, 346]} />
        <Arrow from={[435, 465]} to={[320, 460]} />
        <Arrow from={[564, 568]} to={[679, 535]} />
      </g>
      <path d="M302.500 464.500v15l3.500-3 2.500 6 2.500-1-2.500-6h5z" fill="#fff" stroke="#1c1c2c" />
    </svg>
  );
}

function Watermark() {
  return (
    <div className="pointer-events-none absolute bottom-1.5 right-[7px] z-40 flex items-center opacity-80">
      <svg width="44" height="44" viewBox="0 0 44 44" aria-hidden="true">
        <defs>
          <linearGradient id="swooshBlue" x1="0" y1="1" x2="1" y2="0">
            <stop offset="0" stopColor="#2f6fd0" />
            <stop offset="1" stopColor="#3cc0f0" />
          </linearGradient>
          <linearGradient id="swooshGreen" x1="0" y1="1" x2="1" y2="0">
            <stop offset="0" stopColor="#e8d820" />
            <stop offset="0.5" stopColor="#3cb84c" />
            <stop offset="1" stopColor="#35b070" />
          </linearGradient>
        </defs>
        <path d="M43 2C22 0 4 10 2 24c-1 8 4 12 10 12-3-5-2-11 3-15-1 3-1 7 3 7 5 0 7-4 5-6-3-2-6 0-6 2-1-4 5-7 9-4 4 4-1 12-9 13 9 1 15-5 14-12C29 14 18 13 12 19 18 10 30 4 43 2z" fill="url(#swooshBlue)" />
        <path d="M24 17c9-4 17 0 17 7 0 10-14 19-34 19 14-4 24-10 25-17 0-5-3-8-8-9z" fill="url(#swooshGreen)" />
      </svg>
      <div className="-ml-0.5 flex flex-col font-bold">
        <span className="text-[21px] leading-6 text-[#3f87d4]">极光下载站</span>
        <span className="text-base leading-5 text-[#4cbc6c]">www.xz7.com</span>
      </div>
    </div>
  );
}

export default function App() {
  return (
    <div lang="zh-CN" className="relative flex h-screen flex-col overflow-hidden bg-linear-to-r from-[#e6ebee] to-[#e5e6eb] font-['Noto_Sans','Noto_Sans_CJK_SC',sans-serif] text-xs text-[#262626]">
      <TitleBar />
      <MenuBar />
      <Ribbon />
      <div className="mt-px flex min-h-0 flex-1">
        <SidePanel />
        <VerticalRuler />
        <DocumentArea />
        <ScrollRail />
        <aside className="flex w-[51px] shrink-0 flex-col items-center gap-6 border-l border-[#c9ccd0] pl-1.5 pt-[22px]">
          <span className="h-0.5 w-3.5 shrink-0 bg-[#999]" />
          {TOOLS.map((t) => (
            <button key={t.name} aria-label={t.name}><Ic d={t.d} /></button>
          ))}
        </aside>
      </div>
      <StatusBar />
      <Annotations />
      <Watermark />
    </div>
  );
}
